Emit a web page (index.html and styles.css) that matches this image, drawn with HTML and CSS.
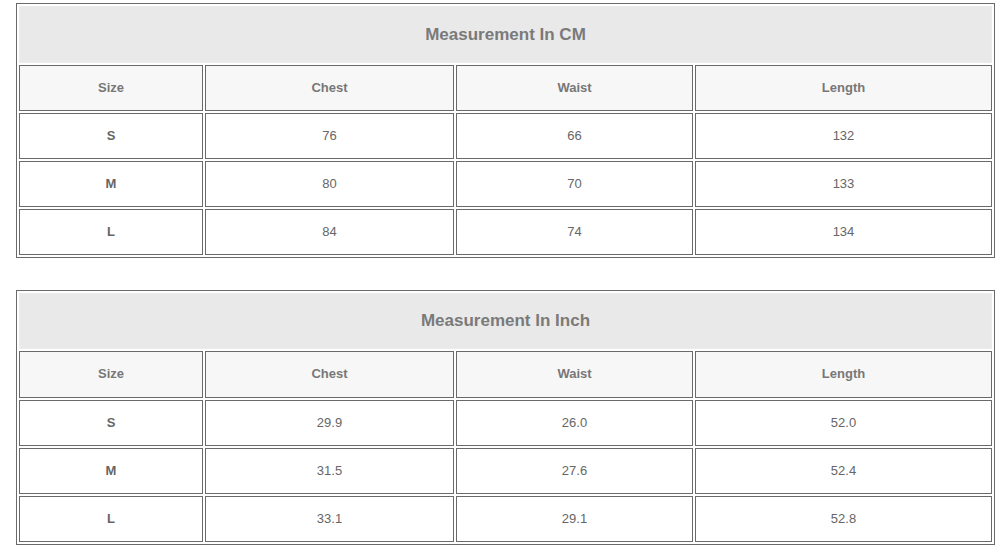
FILE: index.html
```html
<!DOCTYPE html>
<html>
<head>
<meta charset="utf-8">
<title>Size chart</title>
<link rel="stylesheet" href="styles.css">
</head>
<body>
<main class="page">
  <section class="chart">
    <div class="cell title">Measurement In CM</div>
    <div class="cell head">Size</div>
    <div class="cell head">Chest</div>
    <div class="cell head">Waist</div>
    <div class="cell head">Length</div>
    <div class="cell size">S</div><div class="cell">76</div><div class="cell">66</div><div class="cell">132</div>
    <div class="cell size">M</div><div class="cell">80</div><div class="cell">70</div><div class="cell">133</div>
    <div class="cell size">L</div><div class="cell">84</div><div class="cell">74</div><div class="cell">134</div>
  </section>
  <section class="chart chart-inch">
    <div class="cell title">Measurement In Inch</div>
    <div class="cell head">Size</div>
    <div class="cell head">Chest</div>
    <div class="cell head">Waist</div>
    <div class="cell head">Length</div>
    <div class="cell size">S</div><div class="cell">29.9</div><div class="cell">26.0</div><div class="cell">52.0</div>
    <div class="cell size">M</div><div class="cell">31.5</div><div class="cell">27.6</div><div class="cell">52.4</div>
    <div class="cell size">L</div><div class="cell">33.1</div><div class="cell">29.1</div><div class="cell">52.8</div>
  </section>
</main>
</body>
</html>
```
FILE: styles.css
```css
* { box-sizing: border-box; }
html, body { margin: 0; padding: 0; background: #fff; }
body { font-family: "Liberation Sans", Arial, sans-serif; }
.page {
  padding: 3px 0 0 16px;
  display: flex;
  flex-direction: column;
  gap: 32px;
}
.chart {
  width: 979px;
  border: 1px solid #6a6a6a;
  padding: 2px;
  display: grid;
  grid-template-columns: 184px 249px 237px 297px;
  grid-template-rows: 57px;
  grid-auto-rows: 46px;
  gap: 2px;
}
.chart-inch { grid-template-rows: 56px 47px; }
.cell {
  border: 1px solid #6a6a6a;
  background: #fff;
  display: flex;
  align-items: center;
  justify-content: center;
  padding-bottom: 2px;
  font-size: 13px;
  color: #666;
}
.title {
  grid-column: 1 / -1;
  padding-bottom: 0;
  background: #e9e9e9;
  border-color: #ececec;
  font-size: 17px;
  font-weight: bold;
  color: #7a7a7a;
}
.head {
  background: #f7f7f7;
  font-weight: bold;
  color: #777;
}
.size {
  font-weight: bold;
  color: #666;
}
```
